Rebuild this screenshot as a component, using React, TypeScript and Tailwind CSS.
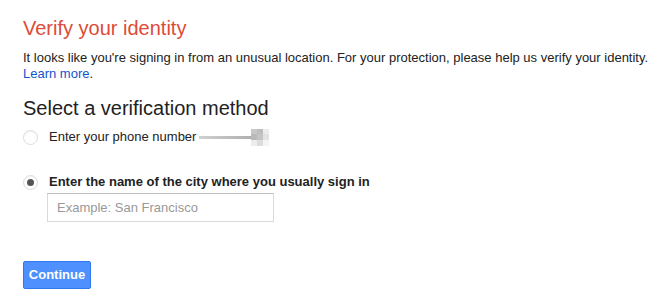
import { useState } from "react";

export default function App() {
  const [method, setMethod] = useState<"phone" | "city">("city");

  return (
    <div className="min-h-screen bg-white pl-[23px] pr-[4px] pt-[16px] font-['Liberation_Sans',Arial,sans-serif] text-[#222]">
      <h1 className="text-[20px] leading-[24px] text-[#dd4b39]">Verify your identity</h1>

      <p className="mt-[10px] text-[13px] leading-[16px]">
        It looks like you're signing in from an unusual location. For your protection, please help us verify your identity.{" "}
        <a href="#" className="text-[#15c]">Learn more</a>.
      </p>

      <h2 className="mt-[14px] text-[20px] leading-[24px] text-[#222]">Select a verification method</h2>

      {/* phone option */}
      <label className="mt-[9px] flex h-[16px] items-center gap-[11px]" onClick={() => setMethod("phone")}>
        <Radio checked={method === "phone"} />
        <span className="text-[13px]">Enter your phone number</span>
        <span className="-ml-[8px] flex items-center">
          <span className="h-[3px] w-[52px] bg-gradient-to-r from-[#d0d0d0] to-[#b0b0b0]" />
          <span className="grid h-[17px] w-[18px] grid-cols-3">
            <span className="bg-[#c8c8c8]" />
            <span className="bg-[#bdbdbd]" />
            <span className="bg-[#ececec]" />
            <span className="bg-[#b9b9b9]" />
            <span className="bg-[#c4c4c4]" />
            <span className="bg-[#e2e2e2]" />
            <span className="bg-[#ececec]" />
            <span className="bg-[#dcdcdc]" />
            <span className="bg-[#f4f4f4]" />
          </span>
        </span>
      </label>

      {/* city option */}
      <label className="mt-[29px] flex h-[16px] items-center gap-[11px]" onClick={() => setMethod("city")}>
        <Radio checked={method === "city"} />
        <span className="text-[13px] font-bold">Enter the name of the city where you usually sign in</span>
      </label>

      <div className="ml-[24px] mt-[3px]">
        <input
          placeholder="Example: San Francisco"
          className="h-[29px] w-[227px] border border-[#d9d9d9] border-t-[#c0c0c0] px-[9px] text-[13px] outline-none placeholder:text-[#999]"
        />
      </div>

      <button className="mt-[39px] h-[28px] w-[68px] rounded-[2px] border border-[#3079ed] bg-[#4d90fe] text-[13px] font-bold text-white">
        Continue
      </button>
    </div>
  );
}

function Radio({ checked }: { checked: boolean }) {
  return (
    <span className="flex h-[15px] w-[15px] shrink-0 items-center justify-center rounded-full border border-[#dcdcdc] bg-white shadow-[inset_0_1px_1px_rgba(0,0,0,0.05)]">
      {checked && <span className="h-[7px] w-[7px] rounded-full bg-[#555]" />}
    </span>
  );
}
